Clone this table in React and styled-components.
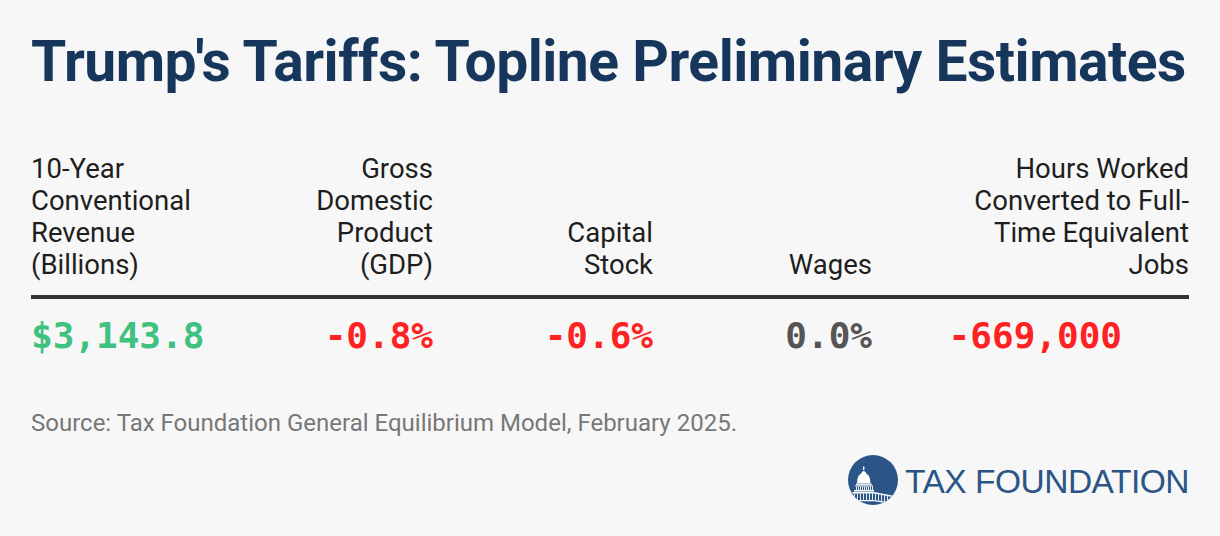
import React from "react";
import styled, { createGlobalStyle } from "styled-components";

const Global = createGlobalStyle`
  html, body { margin: 0; padding: 0; background: #f7f7f7; }
  body { font-family: Roboto, "Liberation Sans", sans-serif; }
`;

const Page = styled.div`
  width: 1220px;
  height: 536px;
  box-sizing: border-box;
  padding: 27px 31px 0 31px;
  background: #f7f7f7;
  display: flex;
  flex-direction: column;
`;

const Title = styled.h1`
  margin: 0;
  font-family: Roboto, sans-serif;
  font-weight: 700;
  font-size: 57px;
  line-height: 70px;
  color: #17365c;
  letter-spacing: -0.5px;
  white-space: nowrap;
`;

const Table = styled.div`
  margin-top: 56px;
  display: grid;
  grid-template-columns: 182px 220px 220px 219px 317px;
`;

const Head = styled.div`
  font-family: Roboto, sans-serif;
  font-size: 27.5px;
  line-height: 32px;
  color: #1e1e1e;
  text-align: ${(p) => (p.$left ? "left" : "right")};
  padding-bottom: 14px;
  border-bottom: 4px solid #333;
  display: flex;
  flex-direction: column;
  justify-content: flex-end;
  box-sizing: border-box;
  white-space: nowrap;
`;

const Value = styled.div`
  font-family: "DejaVu Sans Mono", "Liberation Mono", monospace;
  font-weight: 700;
  font-size: 36px;
  line-height: 40px;
  padding-top: 17px;
  color: ${(p) => p.$color};
  text-align: ${(p) => (p.$left ? "left" : "right")};
  padding-right: ${(p) => p.$pr || 0}px;
  white-space: nowrap;
`;

const Source = styled.p`
  margin: 53px 0 0;
  font-family: Roboto, sans-serif;
  font-size: 24px;
  line-height: 28px;
  color: #777;
  white-space: nowrap;
`;

const Footer = styled.div`
  margin-top: 18px;
  display: flex;
  justify-content: flex-end;
  align-items: center;
  gap: 7px;
`;

const Brand = styled.span`
  font-family: "Liberation Sans", Arial, sans-serif;
  font-size: 33.5px;
  letter-spacing: -0.5px;
  color: #2b5587;
  line-height: 1;
  padding-top: 3px;
`;

const cols1 = [8, 10, 12, 14, 16, 18, 20, 22, 24];
const cols2 = [6, 9, 12, 15, 18, 21, 24, 27, 30, 33, 36, 39];

const Logo = () => (
  <svg width="50" height="50" viewBox="0 0 50 50">
    <defs>
      <clipPath id="tfc">
        <circle cx="25" cy="25" r="25" />
      </clipPath>
    </defs>
    <circle cx="25" cy="25" r="25" fill="#2b5587" />
    <g clipPath="url(#tfc)" fill="#fff">
      <rect x="15" y="11.5" width="1.4" height="3.5" />
      <path d="M13.2 18 Q15.7 13.8 18.2 18 Z" />
      <path d="M9 28 Q9.4 18.4 15.7 17.6 Q22 18.4 22.4 28 Z" />
      <rect x="8" y="28.4" width="15.6" height="1.5" />
      <rect x="7" y="30.4" width="18" height="1" />
      <rect x="6" y="35" width="20" height="1.5" />
      <path d="M4.5 37 L26 37 L44 40.5 L44 42 L26 38.5 L4.5 38.5 Z" />
      <path d="M4.5 45 L26 45 L44 47.5 L44 48.8 L26 46.3 L4.5 46.3 Z" />
    </g>
    <g clipPath="url(#tfc)" stroke="#fff" strokeWidth="0.9">
      {cols1.map((x) => (
        <line key={x} x1={x + 0.5} y1={31.4} x2={x + 0.5} y2={35} />
      ))}
      {cols2.map((x) => {
        const top = x <= 26 ? 38.5 : 38.5 + ((x - 26) * 3.5) / 18;
        const bot = x <= 26 ? 45 : 45 + ((x - 26) * 2.5) / 18;
        return <line key={x} x1={x + 0.5} y1={top} x2={x + 0.5} y2={bot} />;
      })}
    </g>
  </svg>
);

const heads = [
  { t: ["10-Year", "Conventional", "Revenue", "(Billions)"], left: true },
  { t: ["Gross", "Domestic", "Product", "(GDP)"] },
  { t: ["Capital", "Stock"] },
  { t: ["Wages"] },
  { t: ["Hours Worked", "Converted to Full-", "Time Equivalent", "Jobs"] },
];

const values = [
  { v: "$3,143.8", c: "#3fc17f", left: true },
  { v: "-0.8%", c: "#fe2222" },
  { v: "-0.6%", c: "#fe2222" },
  { v: "0.0%", c: "#555555" },
  { v: "-669,000", c: "#fe2222", pr: 67 },
];

export default function App() {
  return (
    <>
      <Global />
      <Page>
        <Title>Trump's Tariffs: Topline Preliminary Estimates</Title>
        <Table>
          {heads.map((h, i) => (
            <Head key={i} $left={h.left}>
              {h.t.map((l, j) => (
                <span key={j}>{l}</span>
              ))}
            </Head>
          ))}
          {values.map((v, i) => (
            <Value key={i} $color={v.c} $left={v.left} $pr={v.pr}>
              {v.v}
            </Value>
          ))}
        </Table>
        <Source>Source: Tax Foundation General Equilibrium Model, February 2025.</Source>
        <Footer>
          <Logo />
          <Brand>TAX FOUNDATION</Brand>
        </Footer>
      </Page>
    </>
  );
}
